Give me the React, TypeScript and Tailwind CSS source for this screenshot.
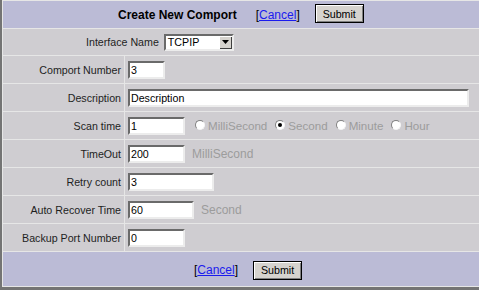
import React from 'react';

const font = "font-['Liberation_Sans',Arial,sans-serif]";

const Field = ({ value, width }: { value: string; width: string }) => (
    <div
        className={`${width} h-[18px] bg-white border-2 border-t-[#6a6a6a] border-l-[#6a6a6a] border-r-[#ececec] border-b-[#ececec] text-[10.67px] leading-[14px] text-black pl-[1px] overflow-hidden whitespace-nowrap`}
    >
        {value}
    </div>
);

const Radio = ({ label, checked }: { label: string; checked?: boolean }) => (
    <span className="flex items-center gap-[3px] text-[#9c9c9c]">
        <span className="w-[10px] h-[10px] rounded-full bg-white border border-t-[#808080] border-l-[#808080] border-r-[#f4f4f4] border-b-[#f4f4f4] flex items-center justify-center">
            {checked && <span className="w-[4px] h-[4px] rounded-full bg-black" />}
        </span>
        {label}
    </span>
);

const Button = () => (
    <div className="h-[19px] w-[49px] bg-[#d6d3ce] border border-black shadow-[inset_1px_1px_0_#ffffff,inset_-1px_-1px_0_#808080] flex items-center justify-center text-[10.67px] text-black">
        Submit
    </div>
);

const Cancel = () => (
    <span className="text-[12px] text-black">
        [<span className="text-[#1a1aee] underline">Cancel</span>]
    </span>
);

interface Row {
    label: string;
    content: React.ReactNode;
}

const rows: Row[] = [
    { label: 'Comport Number', content: <Field value="3" width="w-[37px]" /> },
    { label: 'Description', content: <Field value="Description" width="w-[341px]" /> },
    {
        label: 'Scan time',
        content: (
            <div className="flex items-center gap-[10px]">
                <Field value="1" width="w-[57px]" />
                <div className="flex items-center gap-[8px] text-[11.6px]">
                    <Radio label="MilliSecond" />
                    <Radio label="Second" checked />
                    <Radio label="Minute" />
                    <Radio label="Hour" />
                </div>
            </div>
        )
    },
    {
        label: 'TimeOut',
        content: (
            <div className="flex items-center gap-[7px]">
                <Field value="200" width="w-[57px]" />
                <span className="text-[#9c9c9c]">MilliSecond</span>
            </div>
        )
    },
    { label: 'Retry count', content: <Field value="3" width="w-[86px]" /> },
    {
        label: 'Auto Recover Time',
        content: (
            <div className="flex items-center gap-[7px]">
                <Field value="60" width="w-[66px]" />
                <span className="text-[#9c9c9c]">Second</span>
            </div>
        )
    },
    { label: 'Backup Port Number', content: <Field value="0" width="w-[57px]" /> }
];

export default function App() {
    return (
        <div className={`w-[479px] h-[290px] bg-[#747474] pl-[2px] overflow-hidden ${font} text-[12px]`}>
            <div className="bg-[#e6e6e6] flex flex-col gap-px pt-px pl-px pb-px">
                {/* Header */}
                <div className="h-[27px] bg-[#bbbbd6] flex items-center pl-[115px]">
                    <span className="font-bold text-[12px] text-black">Create New Comport</span>
                    <span className="ml-[19px]">
                        <Cancel />
                    </span>
                    <span className="ml-[15px] mb-[2px]">
                        <Button />
                    </span>
                </div>

                {/* Interface row */}
                <div className="h-[26px] bg-[#cfcdd1] flex items-center pl-[83px] gap-[5px]">
                    <span className="text-[10.67px] text-[#1e1e1e]">Interface Name</span>
                    <div className="w-[70px] h-[17px] bg-white border-2 border-t-[#6a6a6a] border-l-[#6a6a6a] border-r-[#ececec] border-b-[#ececec] flex items-center justify-between">
                        <span className="pl-[2px] text-[10.67px] text-black leading-[13px]">TCPIP</span>
                        <span className="w-[13px] h-[13px] bg-[#d6d3ce] shadow-[inset_1px_1px_0_#ffffff,inset_-1px_-1px_0_#404040] flex items-center justify-center">
                            <svg width="7" height="4" viewBox="0 0 7 4">
                                <path d="M0 0h7L3.5 4z" fill="#000" />
                            </svg>
                        </span>
                    </div>
                </div>

                {/* Field rows */}
                {rows.map((row, i) => (
                    <div key={i} className="grid grid-cols-[121px_1fr] gap-px h-[27px]">
                        <div className="bg-[#cfcdd1] flex items-center justify-end pr-[3px] text-[10.67px] text-[#1e1e1e]">
                            {row.label}
                        </div>
                        <div className="bg-[#cfcdd1] flex items-center pl-[3px]">{row.content}</div>
                    </div>
                ))}

                {/* Footer */}
                <div className="h-[34px] bg-[#bbbbd6] flex items-center pl-[191px] pt-[2px]">
                    <Cancel />
                    <span className="ml-[15px]">
                        <Button />
                    </span>
                </div>
            </div>
        </div>
    );
}
